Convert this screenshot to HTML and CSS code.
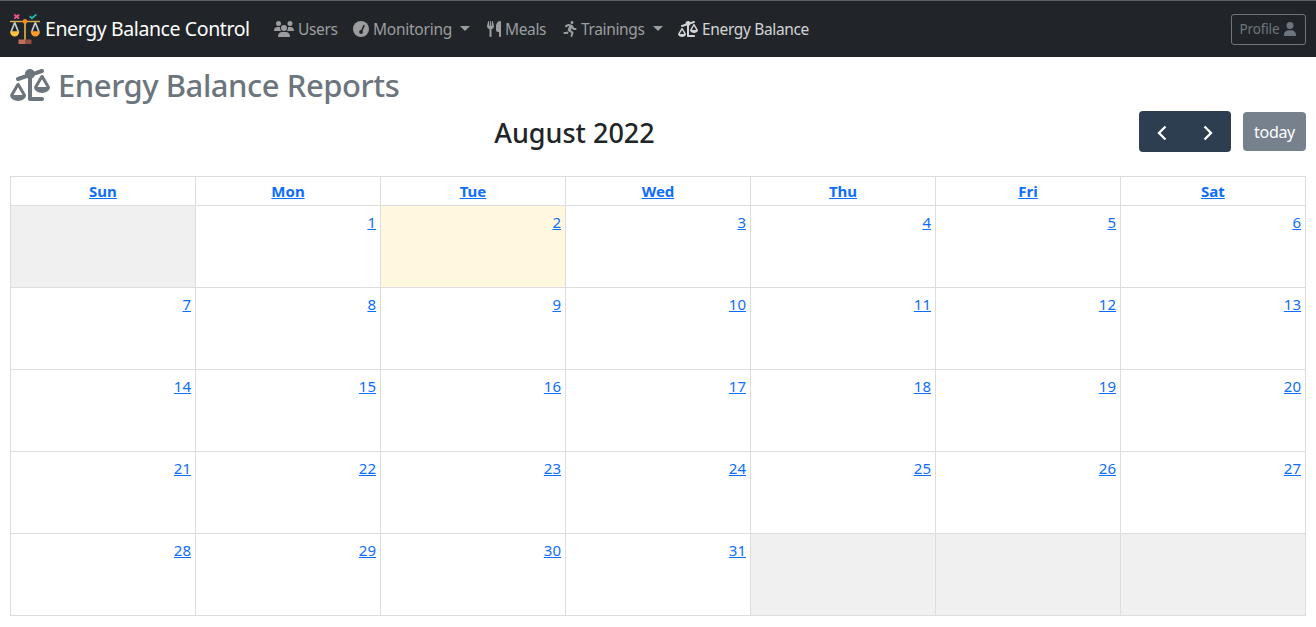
FILE: index.html
```
<!DOCTYPE html>
<html lang="en">
<head>
<meta charset="utf-8">
<title>Energy Balance Control</title>
<link rel="stylesheet" href="styles.css">
</head>
<body>
<svg class="defs" width="0" height="0">
  <symbol id="scale" viewBox="0 0 640 512"><path d="M522.1 62.4c16.8-5.6 25.8-23.7 20.2-40.5S518.6-3.9 501.9 1.6l-113 37.7C375 15.8 349.3 0 320 0c-44.2 0-80 35.8-80 80c0 3 .2 5.9 .5 8.8L117.9 129.6c-16.8 5.6-25.8 23.7-20.2 40.5s23.7 25.8 40.5 20.2l135.5-45.2c4.5 3.2 9.3 5.9 14.4 8.2V480c0 17.7 14.3 32 32 32H512c17.7 0 32-14.3 32-32s-14.3-32-32-32H352V153.3c21-9.2 37.2-27 44.2-49l125.9-42zM439.6 288L512 163.8 584.4 288H439.6zM512 384c62.9 0 115.2-34 126-78.9c2.6-11-1-22.3-6.7-32.1L536.1 109.8c-5-8.6-14.2-13.8-24.1-13.8s-19.1 5.3-24.1 13.8L392.7 273.1c-5.7 9.8-9.3 21.1-6.7 32.1C396.8 350 449.1 384 512 384zM129.2 291.8L201.6 416H56.7l72.4-124.2zM3.2 433.1C14 478 66.3 512 129.2 512s115.2-34 126-78.9c2.6-11-1-22.3-6.7-32.1L153.2 237.8c-5-8.6-14.2-13.8-24.1-13.8s-19.1 5.3-24.1 13.8L9.9 401.1c-5.7 9.8-9.3 21.1-6.7 32.1z"/></symbol>
</svg>
<nav class="navbar">
  <a class="brand">
    <svg class="logo" viewBox="0 0 30 30">
      <path d="M4.3 0.600l4.800 4M9.100 0.600l-4.800 4" stroke="#f0528c" stroke-width="1.900"/>
      <path d="M19.700 2.200l2.300 2L26.400 .4" fill="none" stroke="#1fb5a8" stroke-width="1.900"/>
      <path d="M4.700 8.500L1.200 17.500M4.700 8.500l3.500 9M25.300 8.500L21.800 17.500M25.300 8.500l3.500 9" stroke="#c3cfd1" stroke-width="1.700"/>
      <path d="M0 7.500h30" stroke="#dcae48" stroke-width="1.400"/>
      <path d="M15 6v20" stroke="#f2c055" stroke-width="1.500"/>
      <path d="M0 17.300h9.300a4.650 5.200 0 0 1-9.300 0z" fill="#ffc344"/>
      <path d="M20.700 17.300H30a4.650 5.200 0 0 1-9.300 0z" fill="#ff9c2c"/>
      <circle cx="15" cy="7.400" r="2.300" fill="#ff8c1a"/>
      <path d="M8.500 25.500H15V30H8.500z" fill="#c0705a"/><path d="M15 25.500h6.500V30H15z" fill="#94503f"/>
    </svg>
    <span class="brand-text">Energy Balance Control</span>
  </a>
  <div class="links">
    <a class="link users"><svg class="wide" viewBox="0 0 640 512"><path d="M144 0a80 80 0 1 1 0 160A80 80 0 1 1 144 0zM512 0a80 80 0 1 1 0 160A80 80 0 1 1 512 0zM0 298.700C0 239.800 47.800 192 106.700 192h42.700c15.900 0 31 3.500 44.600 9.700c-1.300 7.200-1.900 14.700-1.900 22.300c0 38.200 16.800 72.500 43.300 96H21.300C9.600 320 0 310.400 0 298.700zM405.300 320c26.600-23.500 43.300-57.800 43.300-96c0-7.600-.7-15-1.900-22.300c13.600-6.300 28.700-9.700 44.600-9.700h42.700C592.200 192 640 239.800 640 298.700c0 11.800-9.600 21.300-21.300 21.300H405.300zM224 224a96 96 0 1 1 192 0 96 96 0 1 1 -192 0zM128 485.300C128 411.700 187.700 352 261.300 352H378.700C452.300 352 512 411.700 512 485.300c0 14.700-11.900 26.700-26.700 26.700H154.700c-14.700 0-26.700-11.900-26.700-26.700z"/></svg><span>Users</span></a>
    <a class="link monitoring"><svg class="square" viewBox="0 0 16 16"><circle cx="8" cy="8" r="8"/><path class="needle" d="M8.300 10.600L11 4.600"/><circle class="hub" cx="8" cy="11" r="1.900"/></svg><span>Monitoring</span><i class="caret"></i></a>
    <a class="link meals"><svg class="narrow" viewBox="0 0 448 512"><path d="M416 0C400 0 288 32 288 176V288c0 35.300 28.700 64 64 64h32V480c0 17.700 14.300 32 32 32s32-14.300 32-32V352 240 32c0-17.700-14.300-32-32-32zM64 16C64 7.800 57.900 1 49.700 .1S34.200 4.600 32.400 12.500L2.100 148.800C.7 155.100 0 161.500 0 167.900c0 45.900 35.100 83.600 80 87.700V480c0 17.700 14.300 32 32 32s32-14.300 32-32V255.600c44.900-4.100 80-41.800 80-87.700c0-6.400-.7-12.800-2.100-19.100L191.600 12.500c-1.800-8-9.300-13.300-17.400-12.400S160 7.800 160 16V150.200c0 5.400-4.400 9.800-9.800 9.800c-5.100 0-9.300-3.900-9.800-9L127.900 14.600C127.200 6.300 120.300 0 112 0s-15.200 6.300-15.900 14.600L83.700 151c-.5 5.100-4.700 9-9.800 9c-5.400 0-9.800-4.400-9.800-9.800V16z"/></svg><span>Meals</span></a>
    <a class="link trainings"><svg class="narrow" viewBox="0 0 448 512"><path d="M400 224h-44l-26.120-53.250c-12.500-25.500-35.380-44.250-61.750-51L197 98.630C189.500 96.840 181.100 95.970 174.500 95.970c-20.880 0-41.330 6.810-58.260 19.780L76.500 146.300C68.310 152.500 64.010 162 64.010 171.600c0 17.110 13.670 32.020 32.020 32.020c6.808 0 13.670-2.158 19.470-6.616l39.630-30.380c5.920-4.488 13.010-6.787 19.530-6.787c2.017 0 3.981 .2196 5.841 .6623l14.620 4.250l-37.500 87.500C154.100 260.300 152.500 268.800 152.500 277.200c0 22.090 11.490 43.520 31.510 55.290l85 50.130l-27.500 87.750c-.9875 3.174-1.458 6.388-1.458 9.550c0 13.650 8.757 26.310 22.460 30.580C265.600 511.500 268.900 512 272 512c13.620 0 26.250-8.750 30.500-22.500l31.750-101c1.211-4.278 1.796-8.625 1.796-12.900c0-16.570-8.780-31.870-23.420-40.600l-61.250-36.130l31.250-78.380l20.250 41.500C310.900 277.400 327.900 288 345.100 288H400c17.620 0 32-14.380 32-32C432 238.300 417.600 224 400 224zM288 96c26.500 0 48-21.500 48-48s-21.500-48-48-48s-48 21.500-48 48S261.500 96 288 96zM129.100 317.500L114.900 352H48c-17.620 0-32 14.380-32 32s14.380 32 32 32h77.500c19.250 0 36.500-11.500 44-29.120l8.875-20.500l-10.750-6.250C150.400 349.900 136.600 334.800 129.100 317.500z"/></svg><span>Trainings</span><i class="caret"></i></a>
    <a class="link active balance"><svg class="wide"><use href="#scale"/></svg><span>Energy Balance</span></a>
  </div>
  <button class="profile"><span>Profile</span><svg viewBox="0 0 448 512"><path d="M224 256A128 128 0 1 0 224 0a128 128 0 1 0 0 256zm-45.700 48C79.800 304 0 383.800 0 482.300C0 498.700 13.300 512 29.700 512H418.300c16.400 0 29.700-13.300 29.700-29.700C448 383.800 368.200 304 269.700 304H178.300z"/></svg></button>
</nav>
<main class="page">
  <h2 class="heading"><svg><use href="#scale"/></svg><span>Energy Balance Reports</span></h2>
  <div class="toolbar">
    <h3 class="month">August 2022</h3>
    <div class="arrows">
      <button><svg viewBox="0 0 10 16"><path d="M8.500 1.500L2 8L8.500 14.500"/></svg></button>
      <button><svg viewBox="0 0 10 16"><path d="M1.500 1.500L8 8L1.500 14.500"/></svg></button>
    </div>
    <button class="today">today</button>
  </div>
  <div class="calendar">
    <div class="day-name"><a>Sun</a></div><div class="day-name"><a>Mon</a></div><div class="day-name"><a>Tue</a></div><div class="day-name"><a>Wed</a></div><div class="day-name"><a>Thu</a></div><div class="day-name"><a>Fri</a></div><div class="day-name"><a>Sat</a></div>
    <div class="day off"></div><div class="day"><a>1</a></div><div class="day current"><a>2</a></div><div class="day"><a>3</a></div><div class="day"><a>4</a></div><div class="day"><a>5</a></div><div class="day"><a>6</a></div>
    <div class="day"><a>7</a></div><div class="day"><a>8</a></div><div class="day"><a>9</a></div><div class="day"><a>10</a></div><div class="day"><a>11</a></div><div class="day"><a>12</a></div><div class="day"><a>13</a></div>
    <div class="day"><a>14</a></div><div class="day"><a>15</a></div><div class="day"><a>16</a></div><div class="day"><a>17</a></div><div class="day"><a>18</a></div><div class="day"><a>19</a></div><div class="day"><a>20</a></div>
    <div class="day"><a>21</a></div><div class="day"><a>22</a></div><div class="day"><a>23</a></div><div class="day"><a>24</a></div><div class="day"><a>25</a></div><div class="day"><a>26</a></div><div class="day"><a>27</a></div>
    <div class="day"><a>28</a></div><div class="day"><a>29</a></div><div class="day"><a>30</a></div><div class="day"><a>31</a></div><div class="day off"></div><div class="day off"></div><div class="day off"></div>
  </div>
</main>
</body>
</html>
```
FILE: styles.css
```
* { box-sizing: border-box; }
body { margin: 0; background: #fff; color: #212529; font: 16px/24px "Noto Sans", "Open Sans", sans-serif; overflow: hidden; }
svg { display: block; fill: currentColor; flex: none; }
button { font-family: inherit; margin: 0; padding: 0; border: 0; }
span { white-space: nowrap; }
.defs { position: absolute; }

.navbar { display: flex; align-items: center; height: 57px; padding: 0 10px; background: #212529; border-top: 1px solid #5b6063; }
.brand { display: flex; align-items: center; width: 264px; color: #fff; font-size: 19.5px; }
.logo { width: 30px; height: 30px; margin-right: 5px; fill: none; }
.brand-text { letter-spacing: -0.4px; }
.links { display: flex; flex: 1; }
.link { display: flex; align-items: center; gap: 4px; color: #9b9d9f; font-size: 15.5px; letter-spacing: -0.35px; }
.link.active { color: #d3d4d5; }
.link svg { height: 16px; }
.wide { width: 20px; }
.square { width: 16px; }
.narrow { width: 14px; }
.users { width: 79px; }
.monitoring { width: 134px; }
.monitoring span { letter-spacing: -0.25px; }
.meals { width: 76px; }
.trainings { width: 115px; }
.needle { fill: none; stroke: #212529; stroke-width: 1.5; stroke-linecap: round; }
.hub { fill: #212529; }
.caret { margin: -2px 0 0 4px; border: 5px solid transparent; border-top-color: currentColor; border-bottom: 0; }
.profile { display: flex; align-items: center; justify-content: center; gap: 4px; width: 75px; height: 31px; border: 1px solid #6c757d; border-radius: 3px; background: transparent; color: #6c757d; font-size: 13.5px; letter-spacing: -0.15px; }
.profile svg { width: 14px; height: 14px; }

.page { padding: 9px 10px 0; }
.heading { display: flex; align-items: center; gap: 8px; height: 38px; margin: 0; color: #6c757d; font-size: 31px; font-weight: 500; letter-spacing: -0.45px; }
.heading svg { width: 40px; height: 32px; }
.toolbar { display: flex; align-items: center; height: 41px; margin: 7px 0 24px; }
.month { flex: 1; margin: 0; text-align: center; font-size: 27px; font-weight: 500; letter-spacing: 0; padding-top: 2px; }
.arrows { display: flex; width: 92px; height: 41px; margin-right: 12px; border-radius: 4px; background: #2c3e50; }
.arrows button { display: flex; flex: 1; align-items: center; justify-content: center; padding-top: 3px; background: transparent; color: #fff; }
.arrows svg { width: 10px; height: 16px; fill: none; stroke: currentColor; stroke-width: 2.3; }
.today { width: 63px; height: 39px; border-radius: 4px; background: #76818d; color: #fff; font-size: 16px; letter-spacing: -0.3px; }

.calendar { display: grid; grid-template-columns: repeat(7, 185px); grid-template-rows: 29px repeat(5, 82px); width: 1296px; border: solid #ddd; border-width: 1px 0 0 1px; }
.calendar a { color: #0d6efd; text-decoration: underline; }
.day-name, .day { border: solid #ddd; border-width: 0 1px 1px 0; }
.day-name { padding-top: 2px; text-align: center; font-size: 15px; font-weight: 700; }
.day { padding: 4px 4px 0; text-align: right; font-size: 15px; }
.off { background: #f0f0f0; }
.current { background: #fff8df; }
```
